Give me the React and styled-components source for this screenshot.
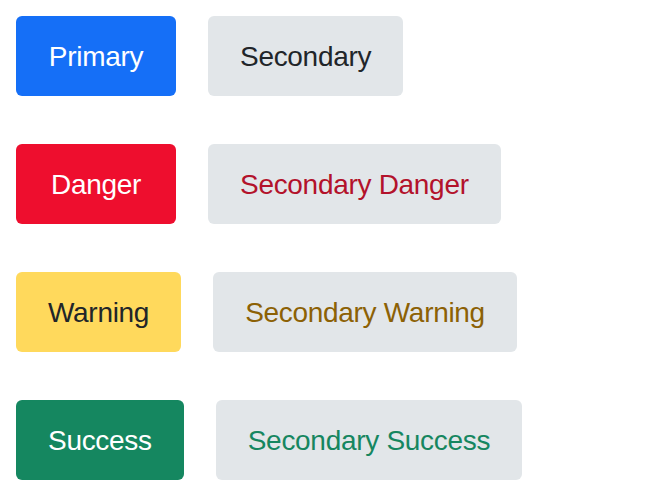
import React from "react";
import styled, { createGlobalStyle } from "styled-components";

const Global = createGlobalStyle`
  html, body { margin: 0; padding: 0; background: #ffffff; }
  body { font-family: "Liberation Sans", Arial, sans-serif; }
`;

const Page = styled.div`
  display: flex;
  flex-direction: column;
  gap: 48px;
  padding: 16px;
`;

const Row = styled.div`
  display: flex;
  gap: 32px;
  align-items: center;
`;

const palettes = {
  primary: { bg: "#156ff7", fg: "#ffffff" },
  danger: { bg: "#ee0e2e", fg: "#ffffff" },
  warning: { bg: "#ffd95c", fg: "#212529" },
  success: { bg: "#158760", fg: "#ffffff" },
};

const secondaryFg = {
  primary: "#212529",
  danger: "#b3122b",
  warning: "#8c6105",
  success: "#168660",
};

const Button = styled.button`
  height: 80px;
  min-width: 160px;
  padding: 2px 32px 0;
  border: none;
  border-radius: 6px;
  font-family: "Liberation Sans", Arial, sans-serif;
  font-size: 28px;
  letter-spacing: -0.3px;
  line-height: 1;
  cursor: pointer;
  white-space: nowrap;
  background: ${(p) => (p.$secondary ? "#e2e6e9" : palettes[p.$tone].bg)};
  color: ${(p) => (p.$secondary ? secondaryFg[p.$tone] : palettes[p.$tone].fg)};
`;

const rows = [
  { tone: "primary", label: "Primary", secondary: "Secondary" },
  { tone: "danger", label: "Danger", secondary: "Secondary Danger" },
  { tone: "warning", label: "Warning", secondary: "Secondary Warning" },
  { tone: "success", label: "Success", secondary: "Secondary Success" },
];

export default function App() {
  return (
    <>
      <Global />
      <Page>
        {rows.map((r) => (
          <Row key={r.tone}>
            <Button $tone={r.tone}>{r.label}</Button>
            <Button $tone={r.tone} $secondary>
              {r.secondary}
            </Button>
          </Row>
        ))}
      </Page>
    </>
  );
}
